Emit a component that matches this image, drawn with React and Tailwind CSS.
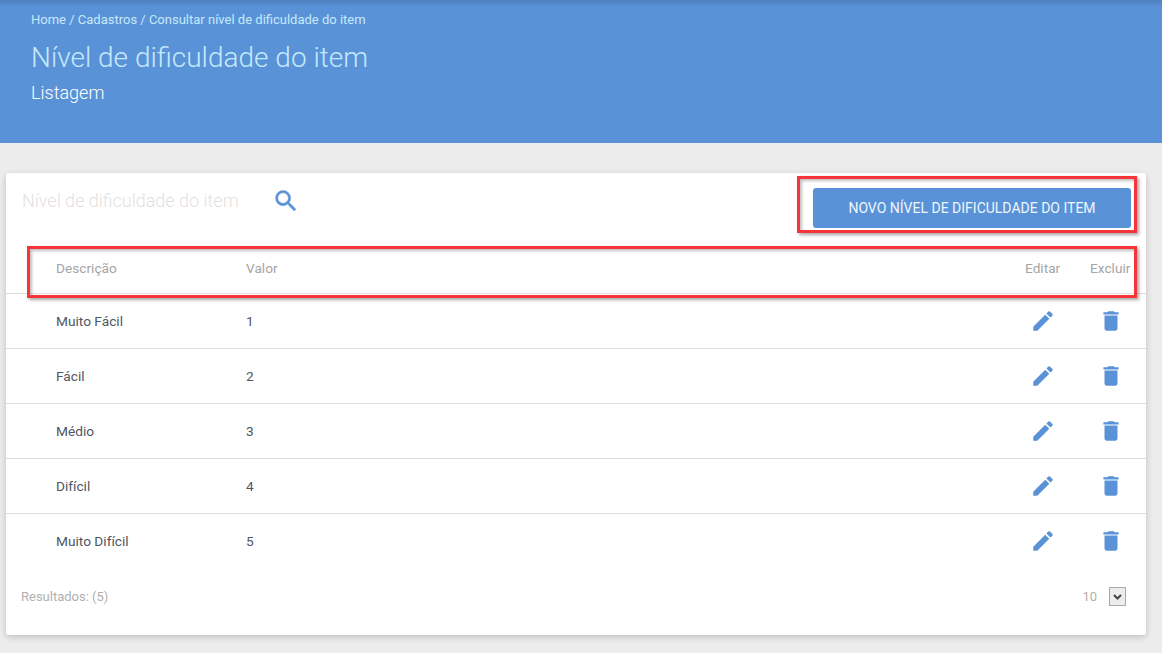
const rows = [
  { name: "Muito Fácil", value: 1 },
  { name: "Fácil", value: 2 },
  { name: "Médio", value: 3 },
  { name: "Difícil", value: 4 },
  { name: "Muito Difícil", value: 5 },
];

function SearchIcon() {
  return (
    <svg className="w-[28px] h-[28px] fill-[#5a92d7] stroke-[#5a92d7] stroke-[0.4]" viewBox="0 0 24 24">
      <path d="M15.5 14h-.79l-.28-.27A6.471 6.471 0 0 0 16 9.5 6.5 6.5 0 1 0 9.5 16c1.61 0 3.09-.59 4.23-1.57l.27.28v.79l5 4.99L20.49 19l-4.99-5zm-6 0C7.01 14 5 11.99 5 9.5S7.01 5 9.5 5 14 7.01 14 9.5 11.99 14 9.5 14z" />
    </svg>
  );
}

function EditIcon() {
  return (
    <svg className="w-[26px] h-[26px] fill-[#5a92d7]" viewBox="0 0 24 24">
      <path d="M3 17.25V21h3.75L17.81 9.94l-3.75-3.75L3 17.25zM20.71 7.04a.996.996 0 0 0 0-1.41l-2.34-2.34a.996.996 0 0 0-1.41 0l-1.83 1.83 3.75 3.75 1.83-1.83z" />
    </svg>
  );
}

function DeleteIcon() {
  return (
    <svg className="w-[26px] h-[26px] fill-[#5a92d7]" viewBox="0 0 24 24">
      <path d="M6 19c0 1.1.9 2 2 2h8c1.1 0 2-.9 2-2V7H6v12zM19 4h-3.5l-1-1h-5l-1 1H5v2h14V4z" />
    </svg>
  );
}

export default function App() {
  return (
    <div className="relative h-[653px] overflow-hidden bg-[#ececec] font-['Roboto',sans-serif]">
      <header className="h-[143px] pl-[31px] pt-[12px] bg-[#5a92d7] bg-[linear-gradient(to_bottom,#4f80bd,#5a92d7_7px)]">
        <div className="text-[13px] leading-[15px] text-[#c4e9fb]">Home / Cadastros / Consultar nível de dificuldade do item</div>
        <h1 className="mt-[7px] text-[28px] leading-[48px] font-light text-[#c4e9fb]">Nível de dificuldade do item</h1>
        <div className="mt-[-1px] text-[18px] leading-[24px] font-light text-white">Listagem</div>
      </header>

      <main className="ml-[6px] mr-[16px] mt-[30px] h-[462px] rounded-[3px] bg-white shadow-[0_2px_6px_rgba(0,0,0,0.2)]">
        <div className="flex h-[75px] items-start justify-between pl-[16px] pr-[15px]">
          <div className="flex items-center pt-[14px]">
            <span className="w-[250px] text-[18px] leading-[28px] font-light text-[#e3dfdf]">Nível de dificuldade do item</span>
            <SearchIcon />
          </div>
          <button className="mt-[15px] h-[40px] w-[318px] rounded-[3px] bg-[#5a92d7] text-[14px] font-normal text-[#eef6fd]">
            NOVO NÍVEL DE DIFICULDADE DO ITEM
          </button>
        </div>

        <div className="flex h-[46px] items-center border-b border-[#dedede] pb-[5px] text-[13.7px] text-[#a5a5a5]">
          <span className="ml-[50px] w-[190px]">Descrição</span>
          <span className="flex-1">Valor</span>
          <span className="w-[65px]">Editar</span>
          <span className="w-[56px]">Excluir</span>
        </div>

        {rows.map((row, index) => (
          <div
            key={row.value}
            className={`flex h-[55px] items-center pt-[1px] border-b text-[13.7px] text-[#50565f] ${index < rows.length - 1 ? "border-[#dedede]" : "border-transparent"}`}
          >
            <span className="ml-[50px] w-[190px]">{row.name}</span>
            <span className="flex-1">{row.value}</span>
            <span className="flex w-[67px] justify-center -mt-[2px]"><EditIcon /></span>
            <span className="flex w-[67px] justify-center -mt-[2px] pl-[3px] mr-[3px]"><DeleteIcon /></span>
          </div>
        ))}

        <div className="flex items-center justify-between pl-[15px] pr-[20px] pt-[18px] text-[13px] text-[#b0b0b0]">
          <span>Resultados: (5)</span>
          <div className="flex items-center gap-[12px]">
            <span className="text-[#b5aca6]">10</span>
            <span className="flex h-[19px] w-[17px] items-center justify-center border border-[#a9a9a9] bg-[#ececec]">
              <svg className="h-[8px] w-[9px]" viewBox="0 0 9 8" fill="none" stroke="#444" strokeWidth="2">
                <path d="M1 2l3.5 3.5L8 2" />
              </svg>
            </span>
          </div>
        </div>
      </main>

      <div className="absolute left-[797px] top-[176px] h-[57px] w-[340px] border-[3px] border-[#f93436] shadow-[2px_2px_3px_rgba(0,0,0,0.35),inset_2px_2px_3px_rgba(0,0,0,0.25)]" />
      <div className="absolute left-[27px] top-[246px] h-[52px] w-[1110px] border-[3px] border-[#f93436] shadow-[2px_2px_3px_rgba(0,0,0,0.35),inset_2px_2px_3px_rgba(0,0,0,0.25)]" />
    </div>
  );
}
